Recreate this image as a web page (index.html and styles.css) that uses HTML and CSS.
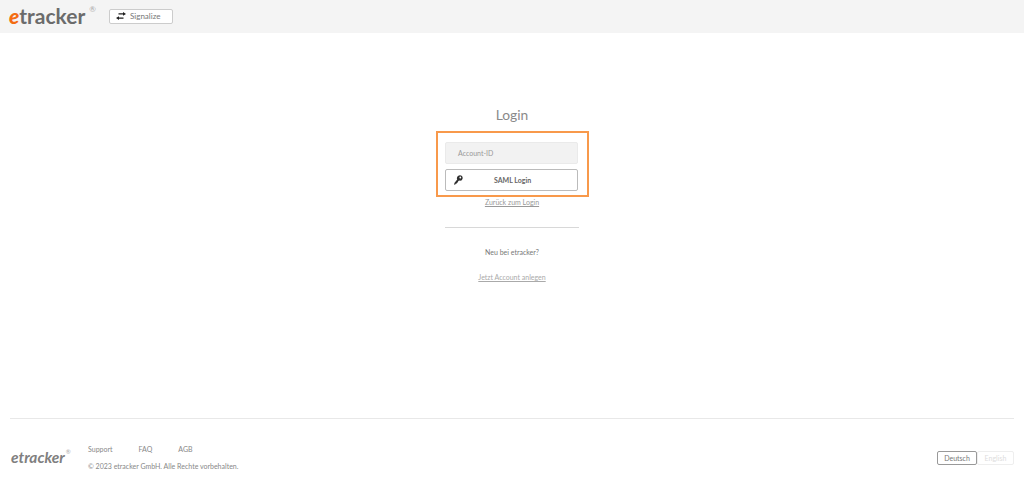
FILE: index.html
```html
<!DOCTYPE html>
<html lang="de">
<head>
<meta charset="utf-8">
<title>etracker Login</title>
<link rel="stylesheet" href="styles.css">
</head>
<body>
<header class="topbar">
  <a class="logo" href="#"><span class="logo-e">e</span>tracker<sup class="logo-r">®</sup></a>
  <button class="signalize" type="button">
    <svg class="swap-icon" width="10" height="8" viewBox="0 0 10 8"><path d="M2.5 1.2H7V0L10 1.9L7 3.8V2.6H2.5ZM7.5 5.4H3V4.2L0 6.1L3 8V6.8H7.5Z" fill="#1f1f1f"/></svg>
    <span>Signalize</span>
  </button>
</header>
<main class="main">
  <h1 class="title">Login</h1>
  <form class="highlight">
    <div class="field">Account-ID</div>
    <button class="saml" type="button">
      <svg class="key-icon" width="9" height="10" viewBox="0 0 9 10"><path d="M5.8 0.2A3 3 0 0 1 8.7 3.2A3 3 0 0 1 5 5.6L4 6.5V7.5H3V8.5H2L1 9.8H0.2L0.4 8L3.2 4.6A3 3 0 0 1 5.8 0.2ZM6.3 1.6A0.9 0.9 0 1 0 6.3 3.4A0.9 0.9 0 1 0 6.3 1.6Z" fill="#2f2f2f" fill-rule="evenodd"/></svg>
      <span>SAML Login</span>
    </button>
  </form>
  <a class="back" href="#">Zurück zum Login</a>
  <hr class="divider">
  <p class="new">Neu bei etracker?</p>
  <a class="create" href="#">Jetzt Account anlegen</a>
</main>
<footer class="footer">
  <div class="footer-row">
    <a class="logo logo-small" href="#">etracker<sup class="logo-r">®</sup></a>
    <div class="footer-info">
      <nav class="footer-links">
        <a href="#">Support</a>
        <a href="#">FAQ</a>
        <a href="#">AGB</a>
      </nav>
      <p class="copyright">© 2023 etracker GmbH. Alle Rechte vorbehalten.</p>
    </div>
    <div class="lang">
      <span class="lang-item lang-active">Deutsch</span>
      <span class="lang-item">English</span>
    </div>
  </div>
</footer>
</body>
</html>
```
FILE: styles.css
```css
* { box-sizing: border-box; }
html, body { margin: 0; padding: 0; }
body {
  width: 1024px;
  height: 497px;
  overflow: hidden;
  display: flex;
  flex-direction: column;
  background: #fff;
  color: #555;
  font-family: "Lato", "Liberation Sans", sans-serif;
}
a { color: inherit; }
.topbar {
  height: 33px;
  flex: none;
  background: #f4f4f4;
  display: flex;
  align-items: center;
  padding: 0 0 1px 9px;
}
.logo {
  font-family: "Lato", sans-serif;
  font-weight: 700;
  font-size: 21px;
  line-height: 30px;
  color: #6b6b6b;
  text-decoration: none;
  display: flex;
  width: 100px;
}
.logo-e { color: #f36c12; font-style: italic; font-weight: 900; }
.logo-r { font-size: 8px; font-weight: 400; line-height: 10px; margin: 3px 0 0 4px; color: #aaa; }
.signalize {
  width: 64px;
  height: 15px;
  padding: 0 0 0 6px;
  background: #fff;
  border: 1px solid #ccc;
  border-radius: 2px;
  display: flex;
  align-items: center;
  gap: 4px;
  font-family: inherit;
  font-size: 8px;
  color: #777;
}
.main {
  flex: 1;
  display: flex;
  flex-direction: column;
  align-items: center;
  padding-top: 72px;
}
.title {
  margin: 0 0 6px;
  font-size: 13.8px;
  line-height: 20px;
  font-weight: 400;
  color: #8a8a8a;
}
.highlight {
  width: 153px;
  height: 66px;
  margin-left: 1px;
  border: 2px solid #f8994b;
  padding: 9px 9px 0 7px;
  display: flex;
  flex-direction: column;
  gap: 5px;
}
.field {
  height: 22px;
  background: #f2f2f2;
  border: 1px solid #eaeaea;
  border-radius: 2px;
  padding-left: 12px;
  font-size: 7px;
  line-height: 21px;
  color: #999;
}
.saml {
  height: 22px;
  background: #fff;
  border: 1px solid #bbb;
  border-radius: 2px;
  padding: 0 0 0 8px;
  display: flex;
  align-items: center;
  font-family: inherit;
  font-size: 7px;
  font-weight: 700;
  color: #666;
}
.saml span { margin-left: 31px; }
.back {
  font-size: 7px;
  line-height: 10px;
  color: #999;
}
.divider {
  width: 134px;
  margin: 20px 0 0;
  border: 0;
  border-top: 1px solid #d8d8d8;
}
.new {
  margin: 19px 0 0;
  font-size: 7px;
  line-height: 10px;
  color: #777;
}
.create {
  margin-top: 15px;
  font-size: 7px;
  line-height: 10px;
  color: #aaa;
}
.footer {
  flex: none;
  height: 79px;
  margin: 0 10px;
  border-top: 1px solid #e8e8e8;
}
.footer-row {
  display: flex;
  align-items: flex-start;
  padding-top: 25px;
}
.logo-small {
  font-size: 15.5px;
  line-height: 20px;
  width: 77px;
  margin: 3px 0 0 1px;
  color: #808080;
  font-style: italic;
}
.logo-small .logo-r { font-size: 6px; line-height: 8px; margin: 1px 0 0 1px; font-style: normal; }
.footer-info { flex: 1; font-size: 7px; color: #888; }
.footer-links { display: flex; gap: 26px; line-height: 10px; }
.footer-links a { text-decoration: none; }
.copyright { margin: 7px 0 0; line-height: 10px; }
.lang { display: flex; margin-top: 7px; font-size: 7px; }
.lang-item {
  width: 37px;
  height: 14px;
  line-height: 12px;
  text-align: center;
  border: 1px solid #eee;
  border-radius: 2px;
  color: #ddd;
}
.lang-active { width: 40px; border-color: #999; color: #777; }
```
